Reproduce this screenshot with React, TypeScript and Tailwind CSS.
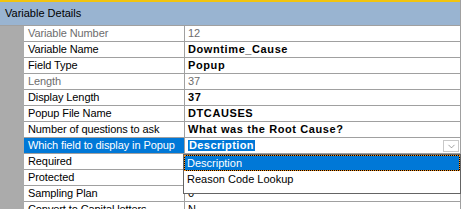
import { ChevronDown } from 'lucide-react'

type Row = {
  label: string
  value?: string
  bold?: boolean
  disabled?: boolean
  selected?: boolean
}

const rows: Row[] = [
  { label: 'Variable Number', value: '12', disabled: true },
  { label: 'Variable Name', value: 'Downtime_Cause', bold: true },
  { label: 'Field Type', value: 'Popup', bold: true },
  { label: 'Length', value: '37', disabled: true },
  { label: 'Display Length', value: '37', bold: true },
  { label: 'Popup File Name', value: 'DTCAUSES', bold: true },
  { label: 'Number of questions to ask', value: 'What was the Root Cause?', bold: true },
  { label: 'Which field to display in Popup', value: 'Description', bold: true, selected: true },
  // values of these two rows sit under the open list
  { label: 'Required' },
  { label: 'Protected' },
  { label: 'Sampling Plan', value: '0' },
  { label: 'Convert to Capital letters', value: 'N' },
]

const options = ['Description', 'Reason Code Lookup']

function PropertyRow({ row }: { row: Row }) {
  const text = row.disabled ? 'text-[#6d6d6d]' : 'text-black'
  return (
    <div className="flex h-[16px] shrink-0">
      <div className="w-[24px] shrink-0 bg-[#ababab]" />
      <div
        className={`w-[161px] shrink-0 border-b border-r border-[#a0a0a0] pl-[4px] leading-[15px] whitespace-nowrap overflow-hidden tracking-[-0.1px] ${
          row.selected ? 'bg-[#0078d7] text-white' : text
        }`}
      >
        {row.label}
      </div>
      <div className={`flex-1 min-w-0 border-b border-[#a0a0a0] pl-[3px] leading-[15px] whitespace-nowrap ${text}`}>
        {row.selected ? (
          <div className="flex items-start h-full">
            <span className="mt-[2px] px-[1px] leading-[11px] bg-[#0078d7] text-white font-bold tracking-[0.4px]">
              {row.value}
            </span>
            <div className="ml-auto mt-[2px] mr-[1px] w-[16px] h-[12px] border border-[#c8c8c8] bg-white flex items-center justify-center">
              <ChevronDown className="w-[11px] h-[11px] text-[#606060]" strokeWidth={1.3} />
            </div>
          </div>
        ) : (
          <span className={row.bold ? 'font-bold tracking-[0.6px]' : ''}>{row.value}</span>
        )}
      </div>
    </div>
  )
}

export default function App() {
  return (
    <div
      className="relative w-[464px] h-[209px] overflow-hidden bg-white text-[11px]"
      style={{ fontFamily: '"Liberation Sans", Arial, sans-serif' }}
    >
      <div className="w-[461px] h-full flex flex-col border-r border-[#a0a0a0]">
        <div className="h-[2px] shrink-0 bg-[#f2c40f]" />
        <div className="h-[24px] shrink-0 bg-[#99b4d1] border-b border-[#a0a0a0] pl-[5px] pt-[2px] leading-[19px] text-black">
          Variable Details
        </div>
        {rows.map((row) => (
          <PropertyRow key={row.label} row={row} />
        ))}
      </div>

      {/* open dropdown list */}
      <div className="absolute left-[183px] top-[154px] w-[278px] h-[40px] border border-[#646464] bg-white">
        <div className="bg-black">
          <div className="h-[16px] border border-dotted border-[#f7931e] bg-[#0078d7] bg-clip-padding pl-[2px] leading-[14px] text-white">
            {options[0]}
          </div>
        </div>
        <div className="h-[16px] pl-[3px] leading-[16px] text-black">{options[1]}</div>
      </div>
    </div>
  )
}
